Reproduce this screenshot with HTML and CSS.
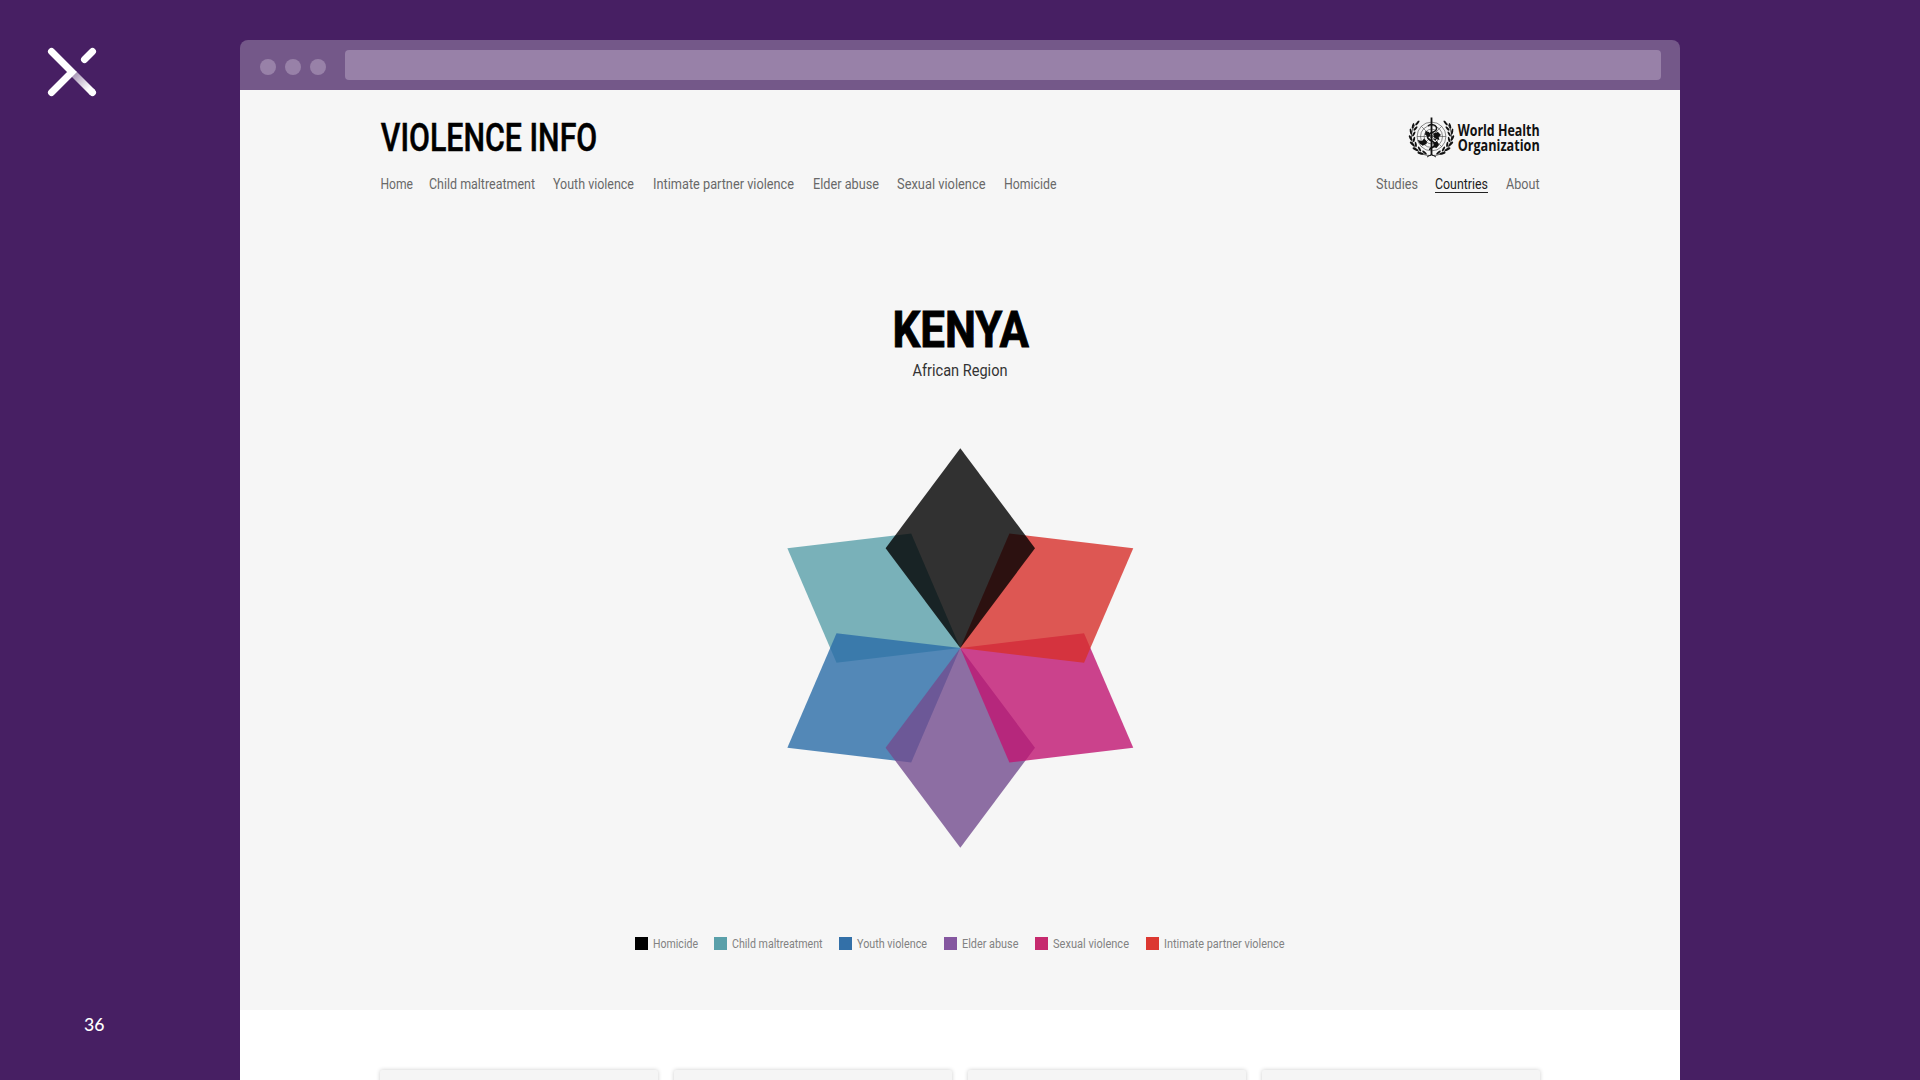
FILE: index.html
```html
<!DOCTYPE html>
<html lang="en">
<head>
<meta charset="utf-8">
<title>Violence Info – Kenya</title>
<link rel="stylesheet" href="styles.css">
</head>
<body>
<div class="slide">
  <aside class="rail">
    <svg class="logo" width="48" height="48" viewBox="0 0 48 48">
      <defs>
        <linearGradient id="fade" gradientUnits="userSpaceOnUse" x1="25" y1="25" x2="41" y2="41">
          <stop offset="0" stop-color="#fff" stop-opacity=".5"/>
          <stop offset="1" stop-color="#fff"/>
        </linearGradient>
      </defs>
      <g fill="none" stroke-width="7" stroke-linecap="round">
        <path d="M25.5 25.5L44.5 44.5" stroke="url(#fade)" stroke-linecap="butt"/>
        <path d="M44.3 44.3L44.5 44.5M36.5 11.5L44.5 3.5M3.5 3.5L24 24L3.5 44.5" stroke="#fff"/>
      </g>
    </svg>
    <svg class="page-number" width="22" height="20"><text x="0" y="15" textLength="20.500" lengthAdjust="spacingAndGlyphs">36</text></svg>
  </aside>

  <main class="browser">
    <div class="chrome">
      <i class="dot"></i><i class="dot"></i><i class="dot"></i>
      <div class="address"></div>
    </div>

    <section class="hero">
      <header class="masthead">
        <svg class="brand" width="220" height="40"><text x="0.800" y="33.500" textLength="216.500" lengthAdjust="spacingAndGlyphs">VIOLENCE INFO</text></svg>
        <svg class="who" width="132" height="42" viewBox="0 0 132 42">
          <defs>
            <g id="laurel">
              <path d="M23 38.5C13 39 4.500 32 3.500 21C3 14 6 8 10 4.500" fill="none" stroke="#111" stroke-width=".7"/>
              <g fill="#111">
                <ellipse cx="9.500" cy="6" rx="3" ry="1" transform="rotate(-52 9.500 6)"/>
                <ellipse cx="5" cy="8.800" rx="3" ry="1" transform="rotate(-75 5 8.800)"/>
                <ellipse cx="7.500" cy="11.500" rx="2.800" ry="1" transform="rotate(-48 7.500 11.500)"/>
                <ellipse cx="2.800" cy="14.500" rx="3" ry="1" transform="rotate(-100 2.800 14.500)"/>
                <ellipse cx="5.800" cy="17" rx="2.800" ry="1" transform="rotate(-60 5.800 17)"/>
                <ellipse cx="2.500" cy="21" rx="3" ry="1.100" transform="rotate(62 2.500 21)"/>
                <ellipse cx="6" cy="22.500" rx="2.800" ry="1" transform="rotate(-78 6 22.500)"/>
                <ellipse cx="4.300" cy="27" rx="3.200" ry="1.100" transform="rotate(45 4.300 27)"/>
                <ellipse cx="7.800" cy="27.500" rx="2.800" ry="1" transform="rotate(80 7.800 27.500)"/>
                <ellipse cx="7.500" cy="32.300" rx="3.300" ry="1.100" transform="rotate(30 7.500 32.300)"/>
                <ellipse cx="11.500" cy="32" rx="2.800" ry="1" transform="rotate(60 11.500 32)"/>
                <ellipse cx="12.500" cy="36.300" rx="3.300" ry="1.100" transform="rotate(12 12.500 36.300)"/>
                <ellipse cx="16.500" cy="35.500" rx="2.800" ry="1" transform="rotate(38 16.500 35.500)"/>
              </g>
            </g>
          </defs>
          <use href="#laurel"/>
          <use href="#laurel" transform="matrix(-1 0 0 1 47 0)"/>
          <path d="M19 40L23.500 37.500L28 40" fill="none" stroke="#111" stroke-width=".9"/>
          <g fill="none" stroke="#444" stroke-width=".6">
            <circle cx="23.500" cy="19.500" r="14.400"/><circle cx="23.500" cy="19.500" r="11"/>
            <circle cx="23.500" cy="19.500" r="7.400"/><circle cx="23.500" cy="19.500" r="3.800"/>
            <path d="M9 19.500H38M13.200 9.200L33.800 29.800M33.800 9.200L13.200 29.800"/>
          </g>
          <path d="M9.500 23L14 24L16 21.500L19 24.500L18.500 27L15 28.500L12 27ZM17.500 14L21 15L22.500 19L20 20L17 17.500ZM25.500 16.500L30 15L33 18L30.500 20L31.500 23L28 22L25.500 20ZM25.500 26L29 24L31 28L28.500 31L25.500 30ZM26 22L28.500 22L27 24Z" fill="#111"/>
          <path d="M23.500 0.500V38.500" stroke="#111" stroke-width="1.800"/>
          <path d="M20 9C23 6 29 8 28.500 12C28 16 19.500 15 19.500 20C19.500 24 27 23.500 27 27.500C27 31 21.500 30 21.500 33" fill="none" stroke="#111" stroke-width="1.500"/>
          <text x="49.700" y="19" textLength="82" lengthAdjust="spacingAndGlyphs">World Health</text>
          <text x="49.700" y="33.500" textLength="82" lengthAdjust="spacingAndGlyphs">Organization</text>
        </svg>
      </header>

      <nav class="menu">
        <div class="links">
          <svg width="30.500" height="20"><text x="-.5" y="14" textLength="32.500" lengthAdjust="spacingAndGlyphs">Home</text></svg>
          <svg width="106" height="20"><text y="14" textLength="106" lengthAdjust="spacingAndGlyphs">Child maltreatment</text></svg>
          <svg width="82" height="20"><text y="14" textLength="81" lengthAdjust="spacingAndGlyphs">Youth violence</text></svg>
          <svg width="142" height="20"><text y="14" textLength="141" lengthAdjust="spacingAndGlyphs">Intimate partner violence</text></svg>
          <svg width="66" height="20"><text y="14" textLength="66" lengthAdjust="spacingAndGlyphs">Elder abuse</text></svg>
          <svg width="89" height="20"><text y="14" textLength="88.500" lengthAdjust="spacingAndGlyphs">Sexual violence</text></svg>
          <svg width="54" height="20"><text y="14" textLength="52.500" lengthAdjust="spacingAndGlyphs">Homicide</text></svg>
        </div>
        <div class="links">
          <svg width="41" height="20"><text x="1" y="14" textLength="42" lengthAdjust="spacingAndGlyphs">Studies</text></svg>
          <svg class="current" width="53" height="20"><text y="14" textLength="53" lengthAdjust="spacingAndGlyphs">Countries</text></svg>
          <svg width="34" height="20"><text y="14" textLength="33.500" lengthAdjust="spacingAndGlyphs">About</text></svg>
        </div>
      </nav>

      <svg class="country" width="140" height="50"><text x="0.500" y="42" textLength="136.500" lengthAdjust="spacingAndGlyphs">KENYA</text></svg>
      <svg class="region" width="96" height="24"><text x="0.500" y="16" textLength="95" lengthAdjust="spacingAndGlyphs">African Region</text></svg>

      <svg class="star" width="400" height="400" viewBox="-200.300 -200 400 400">
        <defs><path id="petal" d="M0 -199.700L74.700 -99.800L0 0L-74.700 -99.800Z"/></defs>
        <use href="#petal" class="child" transform="rotate(-60)"/>
        <use href="#petal" class="youth" transform="rotate(-120)"/>
        <use href="#petal" class="elder" transform="rotate(180)"/>
        <use href="#petal" class="sexual" transform="rotate(120)"/>
        <use href="#petal" class="partner" transform="rotate(60)"/>
        <use href="#petal" class="homicide"/>
      </svg>

      <div class="legend">
        <div class="key"><i class="homicide"></i><svg width="45" height="16"><text y="13" textLength="45" lengthAdjust="spacingAndGlyphs">Homicide</text></svg></div>
        <div class="key"><i class="child"></i><svg width="91" height="16"><text y="13" textLength="90.500" lengthAdjust="spacingAndGlyphs">Child maltreatment</text></svg></div>
        <div class="key"><i class="youth"></i><svg width="71" height="16"><text y="13" textLength="70" lengthAdjust="spacingAndGlyphs">Youth violence</text></svg></div>
        <div class="key"><i class="elder"></i><svg width="57" height="16"><text y="13" textLength="56.500" lengthAdjust="spacingAndGlyphs">Elder abuse</text></svg></div>
        <div class="key"><i class="sexual"></i><svg width="77" height="16"><text y="13" textLength="76" lengthAdjust="spacingAndGlyphs">Sexual violence</text></svg></div>
        <div class="key"><i class="partner"></i><svg width="122" height="16"><text y="13" textLength="120.500" lengthAdjust="spacingAndGlyphs">Intimate partner violence</text></svg></div>
      </div>
    </section>

    <section class="cards">
      <div class="card"></div><div class="card"></div><div class="card"></div><div class="card"></div>
    </section>
  </main>
</div>
</body>
</html>
```

FILE: styles.css
```css
* { box-sizing: border-box; }
body { margin: 0; background: #471f63; font-family: Roboto, "Liberation Sans", sans-serif; }
svg { display: block; flex: none; overflow: visible; }

.slide { display: grid; grid-template-columns: 240px 1440px; height: 1080px; overflow: hidden; }

.rail { display: flex; flex-direction: column; justify-content: space-between; padding: 48px 0 44px 48px; }
.page-number { margin-left: 35.5px; fill: #fff; font: 500 17px Lato, sans-serif; }

.browser { display: flex; flex-direction: column; height: 1040px; margin-top: 40px; background: linear-gradient(#471f63 0 50px, #fff 50px); overflow: hidden; }
.chrome { display: flex; align-items: center; gap: 9px; height: 50px; flex: none; padding: 0 19px 0 20px; border-radius: 8px 8px 0 0; background: #745889; }
.dot { width: 16px; height: 16px; margin-top: 4px; border-radius: 50%; background: #9881a8; }
.address { flex: 1; height: 30px; margin-left: 10px; border-radius: 4px; background: #9881a8; }

.hero { display: flex; flex-direction: column; align-items: center; height: 920px; flex: none; background: #f6f6f6; }
.masthead { display: flex; justify-content: space-between; align-items: flex-start; width: 1160px; margin-top: 27px; }
.brand { font-size: 38px; font-weight: 500; stroke: #000; stroke-width: .5px; }
.who { font: 700 16.5px "Open Sans", sans-serif; fill: #111; }

.menu { display: flex; justify-content: space-between; width: 1160px; margin-top: 16px; padding-left: .5px; font-size: 14.5px; fill: #696969; }
.links { display: flex; gap: 18px; }
.links + .links { gap: 18.5px; }
.current { fill: #222; border-bottom: 1px solid #222; height: 18px; }

.country { margin: 110px 0 0 3px; font-size: 50px; font-weight: 700; stroke: #000; stroke-width: .9px; }
.region { margin-top: 5px; font-size: 16px; fill: #333; }

.star { margin-top: 64px; }
.star use { opacity: .8; }
.homicide { fill: #000; background: #000; }
.child { fill: #5aa0aa; background: #5aa0aa; }
.youth { fill: #2b6da7; background: #3370a8; }
.elder { fill: #734c8e; background: #8557a0; }
.sexual { fill: #c01572; background: #c62a6e; }
.partner { fill: #d72f2b; background: #dc3831; }

.legend { display: flex; gap: 16px; margin-top: 87px; font-size: 12.5px; fill: #828282; }
.key { display: flex; align-items: center; gap: 5px; }
.key i { width: 13px; height: 13px; }

.cards { display: grid; grid-template-columns: repeat(4, 278px); gap: 16px; width: 1160px; margin: 60px 0 0 140px; }
.card { height: 60px; border-radius: 2px; background: #f5f5f5; box-shadow: 0 0 4px rgba(0, 0, 0, .2); }
```
